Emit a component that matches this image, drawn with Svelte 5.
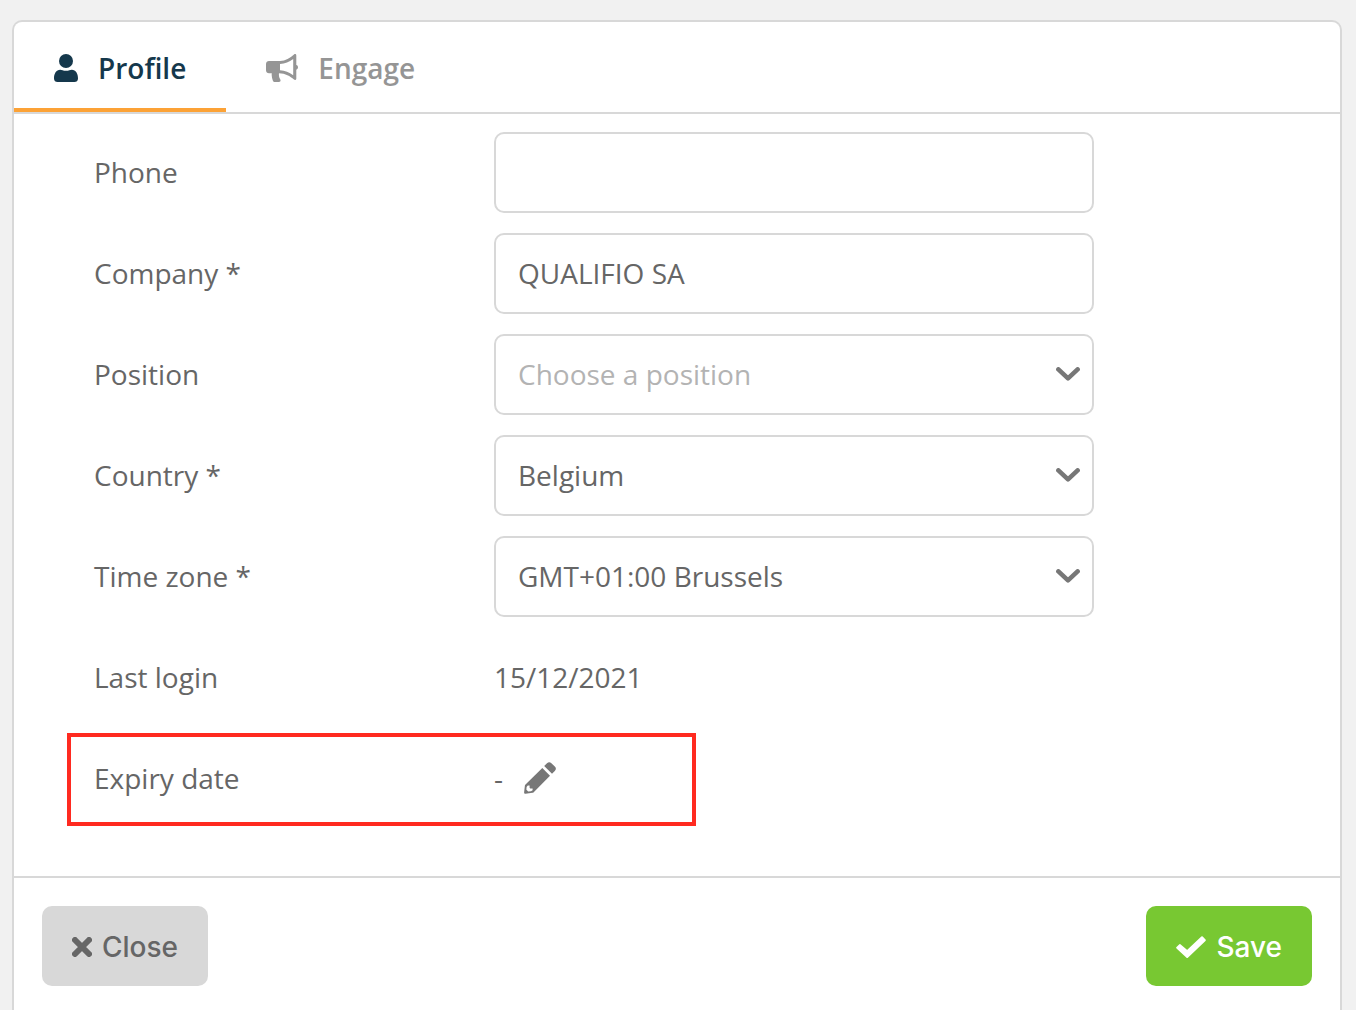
<script>
  let tab = $state('profile');
  let phone = $state('');
  let company = $state('QUALIFIO SA');
  let position = $state('');
  let country = $state('Belgium');
  let zone = $state('GMT+01:00 Brussels');
</script>

{#snippet chevron()}
  <svg class="chevron" viewBox="0 0 24 14" aria-hidden="true">
    <path d="M2.4 2.4 12 11.4 21.6 2.4" fill="none" stroke="currentColor" stroke-width="4.6" stroke-linecap="round" stroke-linejoin="round" />
  </svg>
{/snippet}

<main class="card">
  <div class="tabs" role="tablist">
    <button class="tab" class:active={tab === 'profile'} role="tab" aria-selected={tab === 'profile'} onclick={() => (tab = 'profile')}>
      <svg class="user" viewBox="0 0 24 28" aria-hidden="true">
        <circle cx="12" cy="7" r="7" />
        <path d="M6.2 15.700C2.200 15.900 0 19.600 0 24.400C0 26.600 1.500 28 3.600 28H20.400C22.500 28 24 26.600 24 24.400C24 19.600 21.800 15.900 17.800 15.700C16.200 16 14.900 16.700 12 16.700S7.800 16 6.200 15.700Z" />
      </svg>
      Profile
    </button>
    <button class="tab" class:active={tab === 'engage'} role="tab" aria-selected={tab === 'engage'} onclick={() => (tab = 'engage')}>
      <svg class="horn" viewBox="0 0 32 28" aria-hidden="true">
        <path fill-rule="evenodd" d="M3 7H14C19.500 7 24 4 28 .5C29 -.3 30.300 .2 30.300 1.500V11C31.400 11.200 32 12.200 32 13.300S31.400 15.400 30.300 15.700V24.500C30.300 25.900 29 26.400 28 25.600C24 22.100 19.500 19.300 13 19.200C12.600 22.500 13.500 24 14.300 25.500C14.800 26.500 14.600 28 13 28H9C8 28 7.200 27.600 6.800 26.500C6 24.200 5.400 21.800 5.800 19.200H3C1.300 19.200 0 17.900 0 16.200V10C0 8.300 1.300 7 3 7ZM14 10.100V16.300C19 16.600 23.200 18.300 27.200 21.300V5.100C23.200 8.100 19 9.800 14 10.100Z" />
      </svg>
      Engage
    </button>
  </div>

  <form id="profile" class="body" onsubmit={(e) => e.preventDefault()}>
    <div class="row">
      <label for="phone">Phone</label>
      <div class="field"><input id="phone" type="tel" bind:value={phone} /></div>
    </div>
    <div class="row">
      <label for="company">Company *</label>
      <div class="field"><input id="company" type="text" bind:value={company} /></div>
    </div>
    <div class="row">
      <label for="position">Position</label>
      <div class="field">
        <select id="position" class:empty={!position} bind:value={position}>
          <option value="">Choose a position</option>
        </select>
        {@render chevron()}
      </div>
    </div>
    <div class="row">
      <label for="country">Country *</label>
      <div class="field">
        <select id="country" bind:value={country}>
          <option>Belgium</option>
        </select>
        {@render chevron()}
      </div>
    </div>
    <div class="row">
      <label for="zone">Time zone *</label>
      <div class="field">
        <select id="zone" bind:value={zone}>
          <option>GMT+01:00 Brussels</option>
        </select>
        {@render chevron()}
      </div>
    </div>
    <div class="row">
      <span class="name">Last login</span>
      <span class="value">15/12/2021</span>
    </div>
    <div class="row marked">
      <span class="name">Expiry date</span>
      <span class="value">-</span>
      <button type="button" class="edit" aria-label="Edit expiry date">
        <svg viewBox="0 0 32 32" aria-hidden="true">
          <path d="M20.200 4 23 1.200Q25.200-.9 27.400 1.200L30.800 4.600Q33 6.800 30.800 9L28 11.800Z" />
          <path fill-rule="evenodd" d="M18.300 6 26 13.700 9.700 30.200Q9.200 30.700 8.500 30.800L1.500 31.800Q0 32 .1 30.500L.9 23.500Q1 22.900 1.500 22.400ZM3.800 23.400 2.600 25.100 2.400 27.800 4.200 29.500 7 29.300 8.600 28.200V26.400H6.200L5.600 25.800V23.400Z" />
        </svg>
      </button>
    </div>
  </form>

  <footer>
    <button type="button" class="btn close">
      <svg class="times" viewBox="0 0 20 20" aria-hidden="true">
        <path d="M3 3 17 17M17 3 3 17" fill="none" stroke="currentColor" stroke-width="6" stroke-linecap="round" />
      </svg>
      Close
    </button>
    <button type="submit" form="profile" class="btn save">
      <svg class="check" viewBox="0 0 30 22" aria-hidden="true">
        <path d="M1.200 11.700 3.800 9.100 11.200 15.300 26 1.200 28.800 4.200 11.200 21Z" stroke="currentColor" stroke-width="2" stroke-linejoin="round" />
      </svg>
      Save
    </button>
  </footer>
</main>

<style>
  :global(body) {
    background: #f1f1f1;
  }
  .card {
    margin: 20px 14px 0 12px;
    border: 2px solid #d8d8d8;
    border-bottom: 0;
    border-radius: 10px 10px 0 0;
    background: #fff;
    color: #666;
    font: 28px/40px 'Open Sans', sans-serif;
  }
  .card :is(button, input, select) {
    font: inherit;
    color: inherit;
    box-sizing: border-box;
    margin: 0;
  }
  svg {
    display: block;
    flex: none;
    fill: currentColor;
  }
  .tabs {
    display: flex;
    border-bottom: 2px solid #d8d8d8;
  }
  .card .tab {
    display: flex;
    align-items: center;
    gap: 20px;
    height: 90px;
    padding: 5px 40px 0;
    border: 0;
    border-bottom: 4px solid transparent;
    background: none;
    color: #959595;
    font-weight: 600;
    cursor: pointer;
  }
  .card .tab.active {
    color: #15384c;
    border-color: #fca236;
  }
  .user {
    width: 24px;
    height: 28px;
  }
  .horn {
    width: 32px;
    height: 28px;
  }
  .body {
    display: flex;
    flex-direction: column;
    gap: 20px;
    padding: 18px 80px 57px;
  }
  .row {
    display: flex;
    align-items: center;
    position: relative;
    height: 81px;
  }
  label,
  .name {
    flex: none;
    width: 400px;
  }
  label,
  .name,
  .value {
    padding-bottom: 2px;
  }
  .field {
    position: relative;
    flex: 0 1 600px;
    height: 100%;
  }
  .card :is(input, select) {
    width: 100%;
    height: 100%;
    padding: 0 22px 2px;
    border: 2px solid #d8d8d8;
    border-radius: 10px;
    background: #fff;
    appearance: none;
  }
  .card select.empty {
    color: #b3b3b3;
  }
  .chevron {
    position: absolute;
    right: 14px;
    top: 33px;
    width: 24px;
    height: 14px;
    color: #777;
    pointer-events: none;
  }
  .edit {
    padding: 0 21px 2px;
    border: 0;
    background: none;
    cursor: pointer;
  }
  .edit svg {
    width: 32px;
    height: 32px;
    color: #777;
  }
  .marked::after {
    content: '';
    position: absolute;
    inset: -5px auto -7px -27px;
    width: 629px;
    box-sizing: border-box;
    border: 4px solid #ff2a20;
    pointer-events: none;
  }
  footer {
    display: flex;
    justify-content: space-between;
    padding: 28px 28px 24px;
    border-top: 2px solid #d8d8d8;
  }
  .card .btn {
    display: flex;
    align-items: center;
    gap: 10px;
    height: 80px;
    padding: 2px 30px 0;
    border: 0;
    border-radius: 10px;
    font-family: Inter, sans-serif;
    font-weight: 500;
    cursor: pointer;
  }
  .close {
    background: #d8d8d8;
  }
  .card .save {
    background: #78c832;
    color: #fff;
  }
  .times {
    width: 20px;
    height: 20px;
  }
  .check {
    width: 30px;
    height: 22px;
  }
</style>
